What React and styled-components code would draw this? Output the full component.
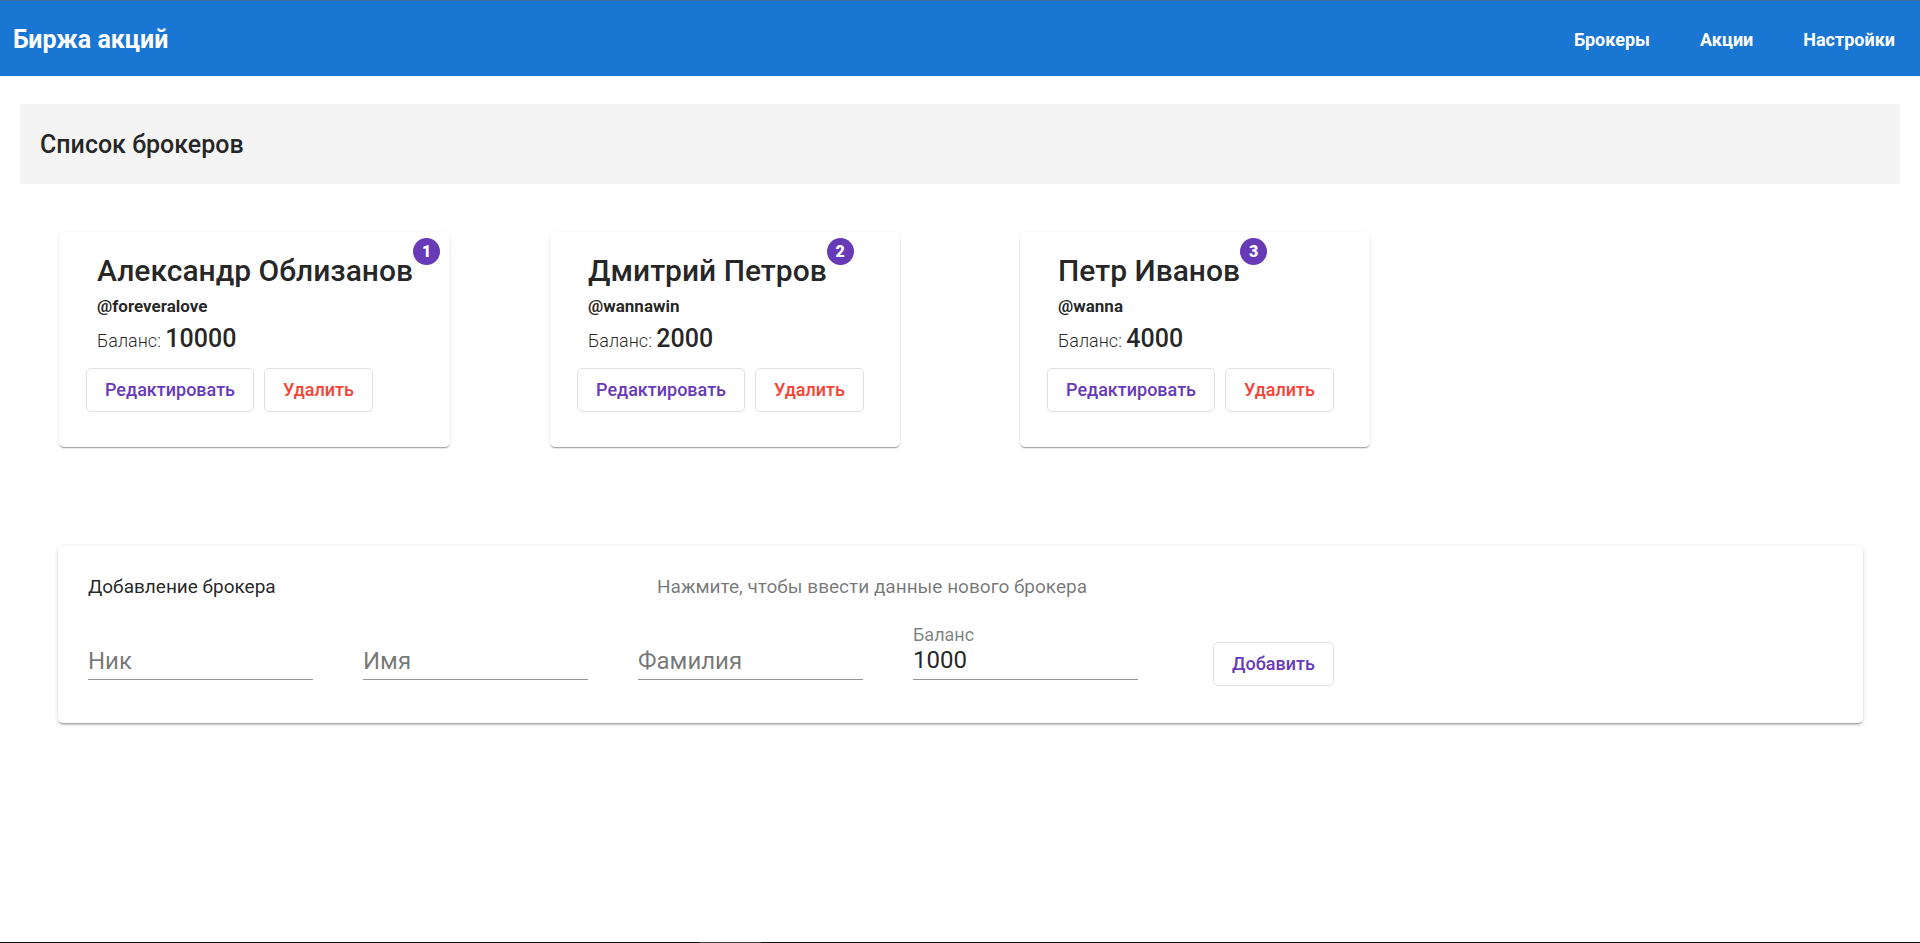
import React, { useState } from 'react';
import styled, { createGlobalStyle } from 'styled-components';

const GlobalStyle = createGlobalStyle`
  *, *::before, *::after { box-sizing: border-box; }
  body {
    margin: 0;
    background: #fff;
    color: rgba(0, 0, 0, 0.87);
    font-family: Roboto, "Liberation Sans", sans-serif;
  }
`;

const Page = styled.div`
  min-height: 100vh;
  display: flex;
  flex-direction: column;
`;

const TopBar = styled.header`
  height: 76px;
  padding: 1px 25px 0 13px;
  border-top: 1px solid #3f6b96;
  background: #1976d2;
  color: #fff;
  display: flex;
  align-items: center;
  justify-content: space-between;
`;

const Brand = styled.span`
  font-size: 25px;
  font-weight: 700;
`;

const Nav = styled.nav`
  display: flex;
  gap: 50px;
`;

const NavLink = styled.a`
  color: inherit;
  font-size: 18px;
  font-weight: 700;
  text-decoration: none;
`;

const Main = styled.main`
  flex: 1;
  padding-top: 28px;
`;

const TitleBar = styled.div`
  height: 80px;
  margin: 0 20px;
  padding: 1px 20px 0;
  background: #f4f4f4;
  display: flex;
  align-items: center;
`;

const Title = styled.h1`
  margin: 0;
  font-size: 25px;
  font-weight: 500;
`;

const BrokerList = styled.ul`
  margin: 48px 9px 99px;
  padding: 0;
  list-style: none;
  display: flex;
  flex-wrap: wrap;
`;

const BrokerItem = styled.li`
  min-width: 470px;
  padding: 0 50px;
`;

const Card = styled.article`
  width: max-content;
  min-width: 350px;
  padding: 19px 10px 35px 27px;
  border-radius: 5px;
  background: #fff;
  box-shadow: 0 2px 1px -1px rgba(0, 0, 0, 0.2), 0 1px 1px rgba(0, 0, 0, 0.14),
    0 1px 3px rgba(0, 0, 0, 0.12);
`;

const CardInfo = styled.div`
  padding-left: 11px;
`;

const NameRow = styled.div`
  display: flex;
  align-items: flex-start;
`;

const Name = styled.h2`
  margin: 0;
  font-size: 30px;
  font-weight: 500;
  line-height: 40px;
`;

const Badge = styled.span`
  min-width: 27px;
  height: 27px;
  margin-top: -13px;
  border-radius: 14px;
  background: #673ab7;
  color: #fff;
  font-size: 16px;
  font-weight: 900;
  line-height: 27px;
  text-align: center;
`;

const Nick = styled.p`
  margin: 0;
  font-size: 17px;
  font-weight: 700;
  line-height: 30px;
`;

const Balance = styled.p`
  margin: 0;
  font-size: 18px;
  font-weight: 300;
  line-height: 40px;
`;

const Amount = styled.span`
  font-size: 25px;
  font-weight: 500;
  line-height: 1;
`;

const Actions = styled.div`
  margin-top: 7px;
  display: flex;
  gap: 10px;
`;

const Button = styled.button`
  height: 44px;
  padding: 0 18px;
  border: 1px solid rgba(0, 0, 0, 0.12);
  border-radius: 5px;
  background: transparent;
  color: ${({ $warn }) => ($warn ? '#f44336' : '#673ab7')};
  font: 500 18px/42px Roboto, "Liberation Sans", sans-serif;
  cursor: pointer;
`;

const Panel = styled.section`
  margin: 0 57px 0 58px;
  padding: 0 30px 37px;
  border-radius: 5px;
  background: #fff;
  box-shadow: 0 3px 1px -2px rgba(0, 0, 0, 0.2), 0 2px 2px rgba(0, 0, 0, 0.14),
    0 1px 5px rgba(0, 0, 0, 0.12);
`;

const PanelHeader = styled.div`
  height: 78px;
  padding-top: 2px;
  display: flex;
  align-items: center;
  font-size: 19px;
`;

const PanelTitle = styled.h2`
  flex: 0 0 569px;
  margin: 0;
  font-size: inherit;
  font-weight: 400;
`;

const PanelHint = styled.p`
  margin: 0;
  color: rgba(0, 0, 0, 0.54);
`;

const Form = styled.form`
  display: flex;
  align-items: flex-start;
  gap: 50px;
`;

const Field = styled.label`
  width: 225px;
  height: 56px;
  display: flex;
  flex-direction: column;
  justify-content: flex-end;
`;

const FieldLabel = styled.span`
  color: rgba(0, 0, 0, 0.5);
  font-size: 18px;
  line-height: 22px;
`;

const Input = styled.input`
  width: 100%;
  height: 34px;
  padding: 0 0 5px;
  border: 0;
  border-bottom: 1px solid rgba(0, 0, 0, 0.42);
  outline: 0;
  background: transparent;
  color: rgba(0, 0, 0, 0.87);
  font: 400 24px/28px Roboto, "Liberation Sans", sans-serif;

  &:placeholder-shown {
    padding-bottom: 3px;
  }

  &::placeholder {
    color: rgba(0, 0, 0, 0.54);
    opacity: 1;
  }
`;

const Submit = styled(Button)`
  margin: 18px 0 0 25px;
`;

const BottomEdge = styled.footer`
  height: 1px;
  background: linear-gradient(to right, #111 700px, #444 700px 761px, #111 761px);
`;

const brokers = [
  { id: 1, name: 'Александр Облизанов', nick: '@foreveralove', balance: 10000 },
  { id: 2, name: 'Дмитрий Петров', nick: '@wannawin', balance: 2000 },
  { id: 3, name: 'Петр Иванов', nick: '@wanna', balance: 4000 },
];

const fields = [
  { key: 'nick', label: 'Ник' },
  { key: 'firstName', label: 'Имя' },
  { key: 'lastName', label: 'Фамилия' },
  { key: 'balance', label: 'Баланс' },
];

function BrokerCard({ broker }) {
  return (
    <Card>
      <CardInfo>
        <NameRow>
          <Name>{broker.name}</Name>
          <Badge>{broker.id}</Badge>
        </NameRow>
        <Nick>{broker.nick}</Nick>
        <Balance>
          Баланс: <Amount>{broker.balance}</Amount>
        </Balance>
      </CardInfo>
      <Actions>
        <Button type="button">Редактировать</Button>
        <Button type="button" $warn>Удалить</Button>
      </Actions>
    </Card>
  );
}

export default function App() {
  const [values, setValues] = useState({ nick: '', firstName: '', lastName: '', balance: '1000' });

  return (
    <Page>
      <GlobalStyle />
      <TopBar>
        <Brand>Биржа акций</Brand>
        <Nav>
          <NavLink href="#brokers">Брокеры</NavLink>
          <NavLink href="#stocks">Акции</NavLink>
          <NavLink href="#settings">Настройки</NavLink>
        </Nav>
      </TopBar>
      <Main>
        <TitleBar>
          <Title>Список брокеров</Title>
        </TitleBar>
        <BrokerList>
          {brokers.map((broker) => (
            <BrokerItem key={broker.id}>
              <BrokerCard broker={broker} />
            </BrokerItem>
          ))}
        </BrokerList>
        <Panel>
          <PanelHeader>
            <PanelTitle>Добавление брокера</PanelTitle>
            <PanelHint>Нажмите, чтобы ввести данные нового брокера</PanelHint>
          </PanelHeader>
          <Form onSubmit={(event) => event.preventDefault()}>
            {fields.map(({ key, label }) => (
              <Field key={key}>
                {values[key] && <FieldLabel>{label}</FieldLabel>}
                <Input
                  aria-label={label}
                  placeholder={label}
                  value={values[key]}
                  onChange={(event) => setValues({ ...values, [key]: event.target.value })}
                />
              </Field>
            ))}
            <Submit type="submit">Добавить</Submit>
          </Form>
        </Panel>
      </Main>
      <BottomEdge />
    </Page>
  );
}
